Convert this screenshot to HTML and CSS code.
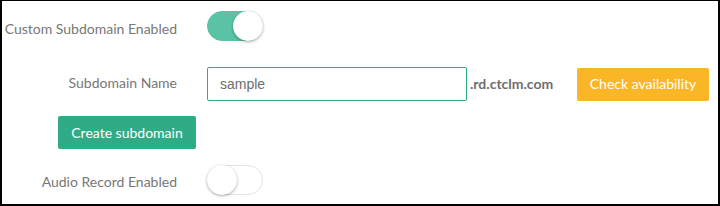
FILE: index.html
```html
<!DOCTYPE html>
<html>
<head>
<meta charset="utf-8">
<link rel="stylesheet" href="styles.css">
</head>
<body>
<div class="panel">
  <div class="row row-toggle">
    <div class="label">Custom Subdomain Enabled</div>
    <div class="control"><span class="switch on"><span class="knob"></span></span></div>
  </div>
  <div class="row row-name">
    <div class="label">Subdomain Name</div>
    <div class="control inline">
      <div class="input">sample</div>
      <span class="suffix">.rd.ctclm.com</span>
      <button class="btn btn-warning">Check availability</button>
    </div>
  </div>
  <div class="row row-create">
    <button class="btn btn-success">Create subdomain</button>
  </div>
  <div class="row row-audio">
    <div class="label">Audio Record Enabled</div>
    <div class="control"><span class="switch off"><span class="knob"></span></span></div>
  </div>
</div>
</body>
</html>
```
FILE: styles.css
```css
html, body {
  margin: 0;
  padding: 0;
  background: #fff;
}
.panel {
  width: 720px;
  height: 206px;
  box-sizing: border-box;
  border-style: solid;
  border-color: #000;
  border-width: 1px 2px 2px 2px;
  padding: 10px 0 0 0;
  font-family: Lato, "Liberation Sans", sans-serif;
  font-size: 14px;
  line-height: 20px;
  color: #777;
}
.row {
  display: flex;
  align-items: flex-start;
}
.label {
  width: 175px;
  text-align: right;
  flex: none;
}
.control {
  margin-left: 30px;
}
.row-toggle .label { margin-top: 8px; }
.row-name { margin-top: 26px; }
.row-name .label { margin-top: 6px; }
.row-create { margin-top: 15px; padding-left: 56px; }
.row-audio { margin-top: 16px; }
.row-audio .label { margin-top: 7px; }

.inline {
  display: flex;
  align-items: center;
}
.switch {
  display: block;
  position: relative;
  width: 56px;
  height: 30px;
  box-sizing: border-box;
  border-radius: 15px;
}
.switch.on {
  background: #5bc3a5;
  border: 1px solid #5bc3a5;
}
.switch.off {
  background: #fff;
  border: 1px solid #e3e3e3;
}
.knob {
  position: absolute;
  top: -1px;
  width: 30px;
  height: 30px;
  border-radius: 50%;
  background: #fff;
  box-shadow: 0 1px 3px rgba(0, 0, 0, 0.35);
}
.switch.on .knob { right: -1px; }
.switch.off .knob { left: -1px; }

.input {
  width: 260px;
  height: 34px;
  box-sizing: border-box;
  border: 1px solid #2fad86;
  border-radius: 2px;
  padding: 6px 12px;
  font-family: "Liberation Sans", Arial, sans-serif;
  font-size: 14px;
  line-height: 20px;
  color: #6e6e6e;
}
.suffix {
  margin-left: 3px;
  font-weight: bold;
  color: #6e6e6e;
  width: 107px;
}
.btn {
  height: 33px;
  box-sizing: border-box;
  border: none;
  border-radius: 2px;
  font-family: Lato, "Liberation Sans", sans-serif;
  font-size: 14px;
  line-height: 20px;
  color: #fff;
  padding: 0;
  text-align: center;
}
.btn-warning {
  width: 132px;
  background: #fab626;
}
.btn-success {
  width: 138px;
  background: #2fac85;
}
```
